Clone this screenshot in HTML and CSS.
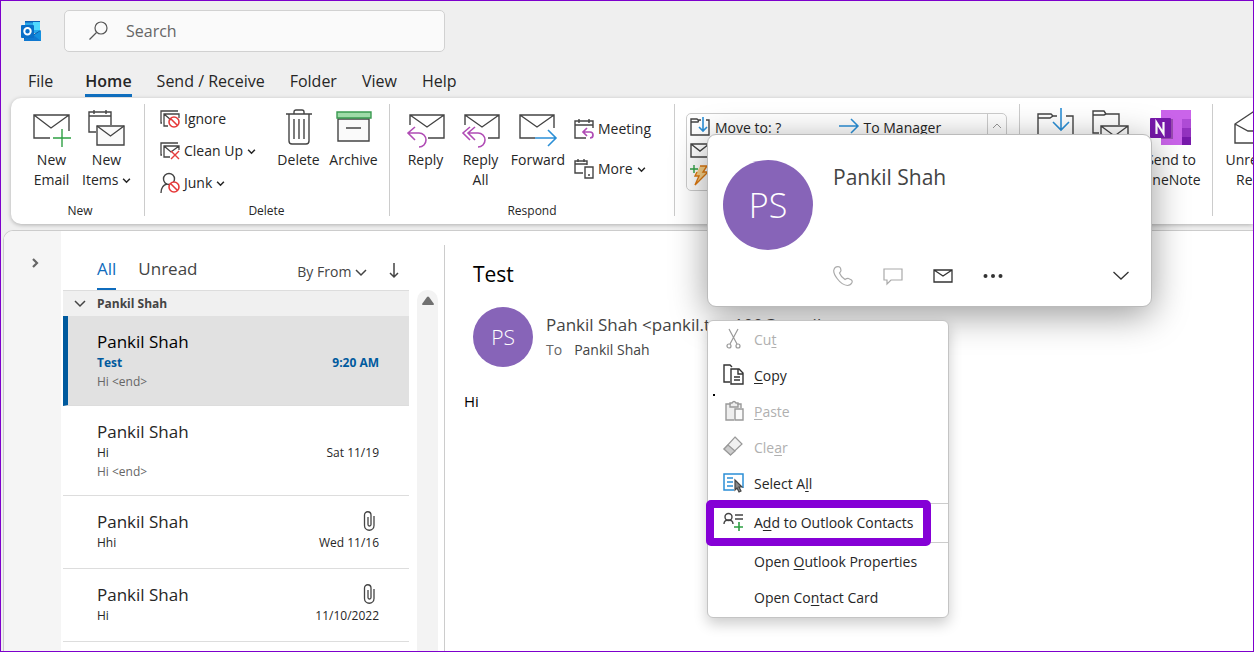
FILE: index.html
```html
<!DOCTYPE html>
<html lang="en">
<head>
<meta charset="utf-8">
<title>Outlook</title>
<link rel="stylesheet" href="styles.css">
</head>
<body>
<svg class="defs" width="0" height="0" aria-hidden="true">
  <symbol id="chev" viewBox="0 0 8 8"><path d="M1 2.500 4 5.500 7 2.500" fill="none" stroke="currentColor" stroke-width="1.400"/></symbol>
  <symbol id="clip" viewBox="0 0 12 22"><path d="M11 5v9.500a4.700 4.700 0 0 1-9.500 0V4a3.200 3.200 0 0 1 6.500 0v9.500a1.500 1.500 0 0 1-3 0V6" fill="none" stroke="#444" stroke-width="1.300"/></symbol>
</svg>
<div class="app">
  <header class="top">
    <svg class="logo" viewBox="0 0 20 20" width="20" height="20" role="img" aria-label="Outlook">
      <path fill="#28a8ea" d="M4 0h15v12H4z"/><path fill="#0f5fb5" d="M4 0h15v1.500H4z"/><path fill="#50d9ff" d="M12 1h7v8h-7z"/><path fill="#0a4f9c" d="m20 9-7 4v1H3v6h10z"/><path fill="#1490df" d="M20 9.500V20H3v-2l10-4z"/><path fill="#0f78d0" d="m13 14.500 7 5.500H3v-2z"/>
      <rect y="4" width="13" height="13" rx="1" fill="#0a6fc8"/><circle cx="6.500" cy="10.300" r="3.200" fill="none" stroke="#fff" stroke-width="2"/>
    </svg>
    <label class="search">
      <svg width="20" height="20" viewBox="0 0 20 20" fill="none" stroke="#555" stroke-width="1.200"><circle cx="12" cy="7" r="6"/><path d="M7.500 11.500.500 18.500"/></svg>
      <input type="search" placeholder="Search" aria-label="Search">
    </label>
  </header>
  <nav class="tabs">
    <button>File</button><button class="on">Home</button><button>Send / Receive</button><button>Folder</button><button>View</button><button>Help</button>
  </nav>

  <section class="ribbon" aria-label="Home ribbon">
    <div class="group g-new">
      <div class="tools">
        <button class="big"><svg width="38" height="38" viewBox="0 0 38 38" fill="none" stroke="#444" stroke-width="1.400"><path d="M17 28H1V5h35v16M1 5l17 13L36 5"/><path stroke="#2ea043" d="M29 19v18M20 28h18"/></svg><span>New<br>Email</span></button>
        <button class="big"><svg width="38" height="38" viewBox="0 0 38 38" fill="none" stroke="#444" stroke-width="1.400"><path d="M8 22H1V2h22v13M1 6h22M6 0v4M18 0v4"/><path fill="#fafafa" d="M9 16h27v19H9z"/><path d="m9 16 13.500 10L36 16"/></svg><span>New<br>Items <svg class="cv"><use href="#chev"/></svg></span></button>
      </div>
      <div class="cap">New</div>
    </div>
    <div class="group g-delete">
      <div class="tools">
        <div class="col">
          <button class="small"><svg width="20" height="20" viewBox="0 0 20 20" fill="none" stroke="#444" stroke-width="1.300"><path d="M2 14H1V2h17M8 17H4V5h15v4M4 5l7 6"/><g stroke="#e63b3b" stroke-width="1.600"><circle cx="14" cy="13" r="5"/><path d="m10.500 9.500 7 7"/></g></svg>Ignore</button>
          <button class="small"><svg width="20" height="20" viewBox="0 0 20 20" fill="none" stroke="#444" stroke-width="1.300"><path d="M2 14H1V2h17M10 16H4V5h15v4M4 5l7 6 8-6"/><path stroke="#e63b3b" stroke-width="1.400" d="m11 10 8 8m0-8-8 8"/></svg>Clean Up <svg class="cv"><use href="#chev"/></svg></button>
          <button class="small"><svg width="20" height="20" viewBox="0 0 20 20" fill="none" stroke="#444" stroke-width="1.400"><circle cx="9" cy="6" r="5.500"/><path d="M1 20c0-5 2-8 6-9"/><g stroke="#e63b3b" stroke-width="1.600"><circle cx="14" cy="14" r="5" fill="#fff"/><path d="m10.500 10.500 7 7"/></g></svg>Junk <svg class="cv"><use href="#chev"/></svg></button>
        </div>
        <button class="big"><svg width="38" height="38" viewBox="0 0 38 38" fill="none" stroke="#444" stroke-width="1.400"><path d="M6 4h26M9 4v27a3 3 0 0 0 3 3h14a3 3 0 0 0 3-3V4M14 4V2a2 2 0 0 1 2-2h6a2 2 0 0 1 2 2v2M14 9v20M19 9v20M24 9v20"/></svg><span>Delete</span></button>
        <button class="big"><svg width="38" height="38" viewBox="0 0 38 38" fill="none" stroke="#444" stroke-width="1.400"><path fill="#fafafa" d="M3 9h31v22H3zM11 18h15"/><path fill="#9fdba8" stroke="#3a9a50" d="M2 2h34v6H2z"/></svg><span>Archive</span></button>
      </div>
      <div class="cap">Delete</div>
    </div>
    <div class="group g-respond">
      <div class="tools">
        <button class="big"><svg width="38" height="38" viewBox="0 0 38 38" fill="none" stroke="#444" stroke-width="1.400"><path d="M3 15V5h34v23H21M3 5l17 12L37 5"/><path stroke="#b04cb5" stroke-width="1.600" d="M8 17 1 23l7 7M1 23h11a7 7 0 0 1 0 14"/></svg><span>Reply</span></button>
        <button class="big"><svg width="38" height="38" viewBox="0 0 38 38" fill="none" stroke="#444" stroke-width="1.400"><path d="M3 15V5h34v23H26M3 5l17 12L37 5"/><path stroke="#b04cb5" stroke-width="1.600" d="m8 17-7 6 7 7M13 17l-7 6 7 7M6 23h10a7 7 0 0 1 0 14"/></svg><span>Reply<br>All</span></button>
        <button class="big"><svg width="38" height="38" viewBox="0 0 38 38" fill="none" stroke="#444" stroke-width="1.400"><path d="M16 28H1V5h34v13M1 5l17 12L35 5"/><path stroke="#2b8fd6" stroke-width="1.600" d="M16 28h21M29 20l8 8-8 8"/></svg><span>Forward</span></button>
        <div class="col two">
          <button class="small"><svg width="20" height="20" viewBox="0 0 20 20" fill="none" stroke="#444" stroke-width="1.400"><path d="M12 19H1V2h18v7M1 6h18M5 0v4M15 0v4"/><path stroke="#b04cb5" stroke-width="1.700" d="m13 9-4 4 4 4M9 13h7a3 3 0 0 1 0 6"/></svg>Meeting</button>
          <button class="small"><svg width="20" height="20" viewBox="0 0 20 20" fill="none" stroke="#444" stroke-width="1.400"><path d="M9 14H1V2h12v4M1 5h12M4 0v3M10 0v3M11 8h8v11h-8zM14 16h2"/></svg>More <svg class="cv"><use href="#chev"/></svg></button>
        </div>
      </div>
      <div class="cap">Respond</div>
    </div>
    <div class="group g-quick">
      <div class="gallery">
        <div class="steps">
          <button class="step"><svg width="20" height="20" viewBox="0 0 20 20" fill="none" stroke="#444" stroke-width="1.400"><path d="M11 2H8L7 1H1v16h18V2h-3M1 4h7l1-2"/><path stroke="#2b8fd6" stroke-width="1.600" d="M13-1v14M9 9l4 4 4-4"/></svg>Move to: ?</button>
          <button class="step"><svg width="20" height="20" viewBox="0 0 20 20" fill="none" stroke="#2b8fd6" stroke-width="1.500"><path d="M0 8h19M12 1l7 7-7 7"/></svg>To Manager</button>
          <button class="step" aria-label="Team Email"><svg width="20" height="20" viewBox="0 0 20 20" fill="none" stroke="#444" stroke-width="1.400"><path d="M1 2h18v13H1zM1 2l9 7 9-7"/></svg></button>
          <span></span>
          <button class="step" aria-label="Create New"><svg width="20" height="20" viewBox="0 0 20 20" fill="none" stroke="#e07a10" stroke-width="1.400"><path fill="#fbd38a" d="M10 0h7l-4 6h5L5 19l4-9H5l2-4"/><path stroke="#2ea043" d="M4-1v8M0 3h8"/></svg></button>
        </div>
        <button class="up" aria-label="Scroll up"><svg width="8" height="8" viewBox="0 0 8 8" fill="none" stroke="#999"><path d="M0 4l4-4 4 4"/></svg></button>
      </div>
    </div>
    <div class="group g-move">
      <div class="tools">
        <button class="big" aria-label="Move"><svg width="38" height="38" viewBox="0 0 38 38" fill="none" stroke="#444" stroke-width="1.400"><path d="M20 6h-4l-2-2H1v30h35V6h-7M1 8h12l3-2"/><path stroke="#2b8fd6" stroke-width="1.600" d="M24-2v22M16 12l8 8 8-8"/></svg></button>
        <button class="big" aria-label="Rules"><svg width="38" height="38" viewBox="0 0 38 38" fill="none" stroke="#444" stroke-width="1.400"><path d="M7 23H1V1h11l2 3h13v11M1 5h11l2-1"/><path d="M9 16h27v18H9zM9 16l13.500 10L36 16"/></svg></button>
        <button class="big wide"><svg width="42" height="38" viewBox="0 0 42 38"><path fill="#ca64ea" d="M11 0h30v35H11z"/><path fill="#ae4bd5" d="M32 9h9v9h-9z"/><path fill="#9332bf" d="M32 18h9v9h-9z"/><path fill="#7719aa" d="M32 27h9v8h-9z"/><path fill="#000" fill-opacity=".25" d="M11 9h12v20H11z"/><rect y="8" width="21" height="20" rx="1" fill="#7719aa"/><path d="M6.500 24V12.500l7 11V12" fill="none" stroke="#fff" stroke-width="2.200"/></svg><span>Send to<br>OneNote</span></button>
      </div>
    </div>
    <div class="group g-tags">
      <div class="tools">
        <button class="big"><svg width="38" height="38" viewBox="0 0 38 38" fill="none" stroke="#444" stroke-width="1.400"><path d="M1 14 19 2l18 12v19H1zM1 14l13 7h10l13-7"/></svg><span>Unread/<br>Read</span></button>
      </div>
    </div>
  </section>

  <main class="panel">
    <aside class="rail"><button aria-label="Expand folder pane"><svg width="8" height="10" viewBox="0 0 8 10" fill="none" stroke="#666" stroke-width="2.200"><path d="m1 1 4 4-4 4"/></svg></button></aside>
    <section class="list">
      <div class="mails">
        <div class="filter">
          <button class="on">All</button><button>Unread</button>
          <button class="sort">By From <svg width="12" height="8" viewBox="0 0 12 8" fill="none" stroke="#444" stroke-width="1.500"><path d="m1 1 5 5 5-5"/></svg></button>
          <button class="dir" aria-label="Reverse order"><svg width="10" height="16" viewBox="0 0 10 16" fill="none" stroke="#444" stroke-width="1.500"><path d="M5 1v14M1 11l4 4 4-4"/></svg></button>
        </div>
        <div class="sender"><svg width="12" height="8" viewBox="0 0 12 8" fill="none" stroke="#444" stroke-width="1.500"><path d="m1 1 5 5 5-5"/></svg>Pankil Shah</div>
        <article class="mail sel"><h3>Pankil Shah</h3><p><b>Test</b><b>9:20 AM</b></p><p class="pre">Hi &lt;end&gt;</p></article>
        <article class="mail"><h3>Pankil Shah</h3><p><span>Hi</span><span>Sat 11/19</span></p><p class="pre">Hi &lt;end&gt;</p></article>
        <article class="mail short"><h3>Pankil Shah<svg width="12" height="22"><use href="#clip"/></svg></h3><p><span>Hhi</span><span>Wed 11/16</span></p></article>
        <article class="mail short"><h3>Pankil Shah<svg width="12" height="22"><use href="#clip"/></svg></h3><p><span>Hi</span><span>11/10/2022</span></p></article>
      </div>
      <div class="scroll"><svg width="12" height="10" viewBox="0 0 12 10"><path fill="#707070" d="M5 1q1-1 2 0l5 7q0 1-1 1H1q-1 0-1-1z"/></svg></div>
    </section>
    <article class="read">
      <h1>Test</h1>
      <div class="from">
        <div class="avatar">PS</div>
        <div><div class="addr">Pankil Shah &lt;pankil.test100@gmail.com&gt;</div><div class="to"><span>To</span>Pankil Shah</div></div>
      </div>
      <p class="body">Hi</p>
    </article>
  </main>

  <section class="card" aria-label="Contact card">
    <div class="avatar large">PS</div>
    <div class="info">
      <h2>Pankil Shah</h2>
      <div class="acts">
        <button aria-label="Call"><svg width="20" height="20" viewBox="0 0 20 20" fill="none" stroke="#aaa" stroke-width="1.200"><path d="M5 .600q2 0 2.500 1.500l.500 2.500q0 1-1.500 2.400 1.500 4 5.500 6.500 1.500-1.200 3-1.200l3.500 1.700q1.200 1 .500 2.500-1.500 3-4.500 3Q9 19 4.500 13 .600 8 .700 4.500 1.500.600 5 .600z"/></svg></button>
        <button aria-label="Chat"><svg width="20" height="20" viewBox="0 0 20 20" fill="none" stroke="#aaa" stroke-width="1.200"><path d="M1 3h18v11H8l-4 4v-4H1z"/></svg></button>
        <button aria-label="Mail"><svg width="20" height="20" viewBox="0 0 20 20" fill="none" stroke="#333" stroke-width="1.300"><path d="M1 4h18v12H1zM1 4l9 6 9-6"/></svg></button>
        <button aria-label="More"><svg width="20" height="20" viewBox="0 0 20 20" fill="#333"><circle cx="2.500" cy="10" r="2"/><circle cx="10" cy="10" r="2"/><circle cx="17.500" cy="10" r="2"/></svg></button>
        <button class="expand" aria-label="Expand"><svg width="16" height="10" viewBox="0 0 16 10" fill="none" stroke="#333" stroke-width="1.300"><path d="m.500 1 7.500 7 7.500-7"/></svg></button>
      </div>
    </div>
  </section>

  <div class="menu" role="menu">
    <button role="menuitem" disabled><svg width="22" height="22" viewBox="0 0 22 22" fill="none" stroke="#999" stroke-width="1.200"><path d="M6 0l8 15M15 0 7 15"/><circle cx="6" cy="17" r="2"/><circle cx="15" cy="17" r="2"/></svg><span>Cu<u>t</u></span></button>
    <button role="menuitem"><svg width="22" height="22" viewBox="0 0 22 22" fill="none" stroke="#333" stroke-width="1.400"><path d="M7 17H1V0h6l2 2M8 4h8l4 4v11H8zM15 4v5h5M11 12h6M11 15h6"/></svg><span><u>C</u>opy</span></button>
    <button role="menuitem" disabled><svg width="22" height="22" viewBox="0 0 22 22" fill="none" stroke="#999" stroke-width="1.400"><path fill="#eee" d="M11 19H3V3h4V2h2q2-3 4 0h2v1h3v4"/><path fill="#fafafa" d="M12 8h8v11h-8z"/><path d="M7 3v3h8V3"/></svg><span><u>P</u>aste</span></button>
    <button role="menuitem" disabled><svg width="22" height="22" viewBox="0 0 22 22" fill="#f1f1f1" stroke="#999" stroke-width="1.200"><path d="m12 0 7 7L7.500 18 1 12z"/><path fill="#ccc" d="m5 8 7 6-4.500 4L1 12z"/></svg><span>Cle<u>a</u>r</span></button>
    <button role="menuitem"><svg width="22" height="22" viewBox="0 0 22 22" fill="none" stroke="#2b8fd6" stroke-width="1.500"><path d="M11 17H1V1h19v14M4 5h6M4 9h6M4 13h6"/><path fill="#888" stroke="#444" stroke-width="1.200" d="M12 7v10l2-2 2 4 2-1-2-4h3z"/></svg><span>Select A<u>l</u>l</span></button>
    <hr>
    <button role="menuitem"><svg width="22" height="22" viewBox="0 0 22 22" fill="none" stroke="#444" stroke-width="1.400"><circle cx="5.500" cy="5" r="3.500"/><path d="M1 12q0-4 4.500-4t4.500 4M12 3h8M12 7h8"/><path stroke="#2ea043" stroke-width="1.600" d="M16 10v9M11 15h9"/></svg><span>A<u>d</u>d to Outlook Contacts</span></button>
    <hr>
    <button role="menuitem"><span class="noicon">Open <u>O</u>utlook Properties</span></button>
    <button role="menuitem"><span class="noicon">Open Co<u>n</u>tact Card</span></button>
    <div class="mark"></div>
    <i class="dot"></i>
  </div>
</div>
</body>
</html>
```
FILE: styles.css
```css
* { box-sizing: border-box; }
body { margin: 0; font-family: "Open Sans", "Noto Sans", sans-serif; font-size: 14px; line-height: 20px; color: #262626; }
button { font: inherit; color: inherit; background: none; border: 0; padding: 0; margin: 0; }
h1, h2, h3, p { margin: 0; font-weight: 400; }
svg { flex: none; overflow: visible; }
.defs { position: absolute; }
.app { position: relative; height: 100vh; overflow: hidden; display: flex; flex-direction: column; background: #efefef; border: 1px solid #7d00cc; }

.top { display: flex; align-items: center; gap: 23px; padding: 9px 20px 0; }
.search { display: flex; align-items: center; gap: 17px; width: 381px; height: 42px; padding: 0 24px; background: #fafafa; border: 1px solid #d1d1d1; border-radius: 5px; }
.search input { flex: 1; min-width: 0; font: inherit; font-size: 16px; border: 0; outline: 0; padding: 0; background: none; }
.search input::placeholder { color: #666; opacity: 1; }
.tabs { display: flex; gap: 25px; padding: 17px 27px 1px; font-size: 16px; line-height: 24px; }
.tabs button { height: 28px; padding-bottom: 1px; border-bottom: 3px solid transparent; }
.tabs .on { font-weight: 600; border-color: #1070c0; margin-left: 7px; }

.ribbon { display: flex; height: 126px; margin: 0 0 0 10px; background: #fff; border-radius: 10px 0 0 10px; box-shadow: 0 1px 4px #0004; padding: 6px 0 8px; overflow: hidden; flex: none; }
.group { display: flex; flex-direction: column; justify-content: space-between; border-right: 1px solid #ccc; flex: none; }
.tools { display: flex; padding-top: 6px; height: 92px; }
.cap { text-align: center; font-size: 12px; line-height: 10px; }
.big { width: 55px; flex: none; display: flex; flex-direction: column; align-items: center; gap: 2px; white-space: nowrap; }
.cv { width: 9px; height: 9px; }
.col { display: flex; flex-direction: column; gap: 12px; }
.small { display: flex; align-items: center; gap: 4px; white-space: nowrap; }
.g-new { width: 134px; padding: 0 8px 0 13px; }
.g-delete { width: 245px; padding: 0 16px 0 15px; }
.g-delete .col { width: 111px; flex: none; margin-top: -1px; }
.g-respond { width: 285px; padding: 0 8px 0 8px; }
.g-respond .big:nth-child(3) { width: 60px; }
.col.two { gap: 20px; padding: 9px 0 0 6px; }
.g-quick { width: 345px; padding: 9px 12px 0 11px; justify-content: flex-start; }
.gallery { display: flex; height: 78px; border: 1px solid #ccc; border-radius: 5px; }
.steps { flex: 1; display: grid; grid-template-columns: 1fr 1fr; grid-auto-rows: 24px; padding-top: 2px; padding-left: 3px; }
.step { display: flex; align-items: center; gap: 5px; }
.up { width: 19px; height: 26px; border-left: 1px solid #ccc; }
.g-move { width: 193px; padding-left: 8px; }
.wide { width: 66px; }
.g-tags { padding-left: 12px; }

.panel { flex: 1; min-height: 0; display: flex; margin: 6px 0 0 2px; background: #fff; border: 1px solid #ccc; border-width: 1px 0 0 1px; border-radius: 10px 0 0 0; overflow: hidden; }
.rail { width: 57px; background: #f5f5f5; padding: 22px 0 0 28px; flex: none; }
.list { width: 384px; flex: none; display: flex; gap: 8px; padding-left: 2px; margin-top: 14px; border-right: 1px solid #ccc; }
.mails { width: 346px; padding-top: 10px; }
.filter { display: flex; align-items: center; padding-left: 34px; height: 35px; gap: 22px; font-size: 17px; color: #444; }
.filter button { height: 35px; border-bottom: 2px solid transparent; padding-bottom: 6px; }
.filter .on { color: #0f6cbd; border-color: #0f6cbd; }
.filter .sort { margin-left: auto; font-size: 14px; padding: 0; }
.filter .dir { margin-right: 10px; padding: 0; }
.sender { display: flex; align-items: center; gap: 11px; height: 26px; padding-left: 11px; background: #f0f0f0; border-top: 1px solid #ddd; font-size: 12px; font-weight: 700; color: #444; }
.mail { padding: 15px 30px 14px 34px; border-bottom: 1px solid #ddd; }
.mail.short { padding-bottom: 16px; }
.mail h3 { display: flex; justify-content: space-between; font-size: 17px; line-height: 22px; padding-right: 4px; }
.mail p { display: flex; justify-content: space-between; font-size: 12px; line-height: 19px; }
.mail b { color: #005a9e; }
.mail .pre { color: #666; }
.mail.sel { background: #e1e1e1; border-left: 5px solid #005a9e; padding-left: 29px; }
.mail.sel h3 { color: #000; }
.scroll { width: 21px; margin-top: 45px; border-radius: 10px 10px 0 0; background: #f3f3f3; text-align: center; padding-top: 1px; }

.read { flex: 1; padding: 28px 0 0 28px; }
.read h1 { font-size: 21px; line-height: 30px; color: #000; }
.from { display: flex; gap: 13px; margin-top: 18px; }
.avatar { width: 60px; height: 60px; border-radius: 50%; background: #8764b8; color: #fff; display: grid; place-items: center; font-size: 21px; flex: none; font-weight: 300; }
.large { width: 90px; height: 90px; font-size: 34px; }
.addr { font-size: 17px; line-height: 24px; padding-top: 6px; white-space: nowrap; color: #444; }
.to { line-height: 24px; padding-top: 1px; color: #444; }
.to span { margin-right: 12px; color: #666; }
.body { margin: 24px 0 0 -9px; font-size: 15px; color: #000; }

.card { position: absolute; left: 706px; top: 133px; width: 445px; height: 173px; display: flex; gap: 20px; padding: 25px 15px 20px; background: #fff; border: 1px solid #bbb; border-radius: 9px; box-shadow: 0 8px 36px #0006; }
.info { flex: 1; display: flex; flex-direction: column; justify-content: space-between; }
.info h2 { font-size: 21px; line-height: 34px; color: #444; }
.acts { display: flex; align-items: center; gap: 30px; }
.acts svg { display: block; }
.acts .expand { margin: 0 7px 0 auto; }
.menu { position: absolute; left: 706px; top: 319px; width: 242px; padding: 1px 0; background: #fff; border: 1px solid #c4c4c4; border-radius: 6px; box-shadow: 0 6px 14px #0003; }
.menu button { display: flex; align-items: center; gap: 9px; width: 100%; height: 36px; padding-left: 15px; text-align: left; }
.menu button:disabled { color: #b0b0b0; }
.menu hr { margin: 1px 0; border: 0; border-top: 1px solid #ccc; }
.menu u { text-underline-offset: 2px; }
.noicon { padding-left: 31px; }
.mark { position: absolute; left: -2px; top: 179px; width: 225px; height: 46px; border: 8px solid #8500d6; border-radius: 5px; }
.dot { position: absolute; left: 5px; top: 73px; width: 2px; height: 2px; background: #000; }
```
